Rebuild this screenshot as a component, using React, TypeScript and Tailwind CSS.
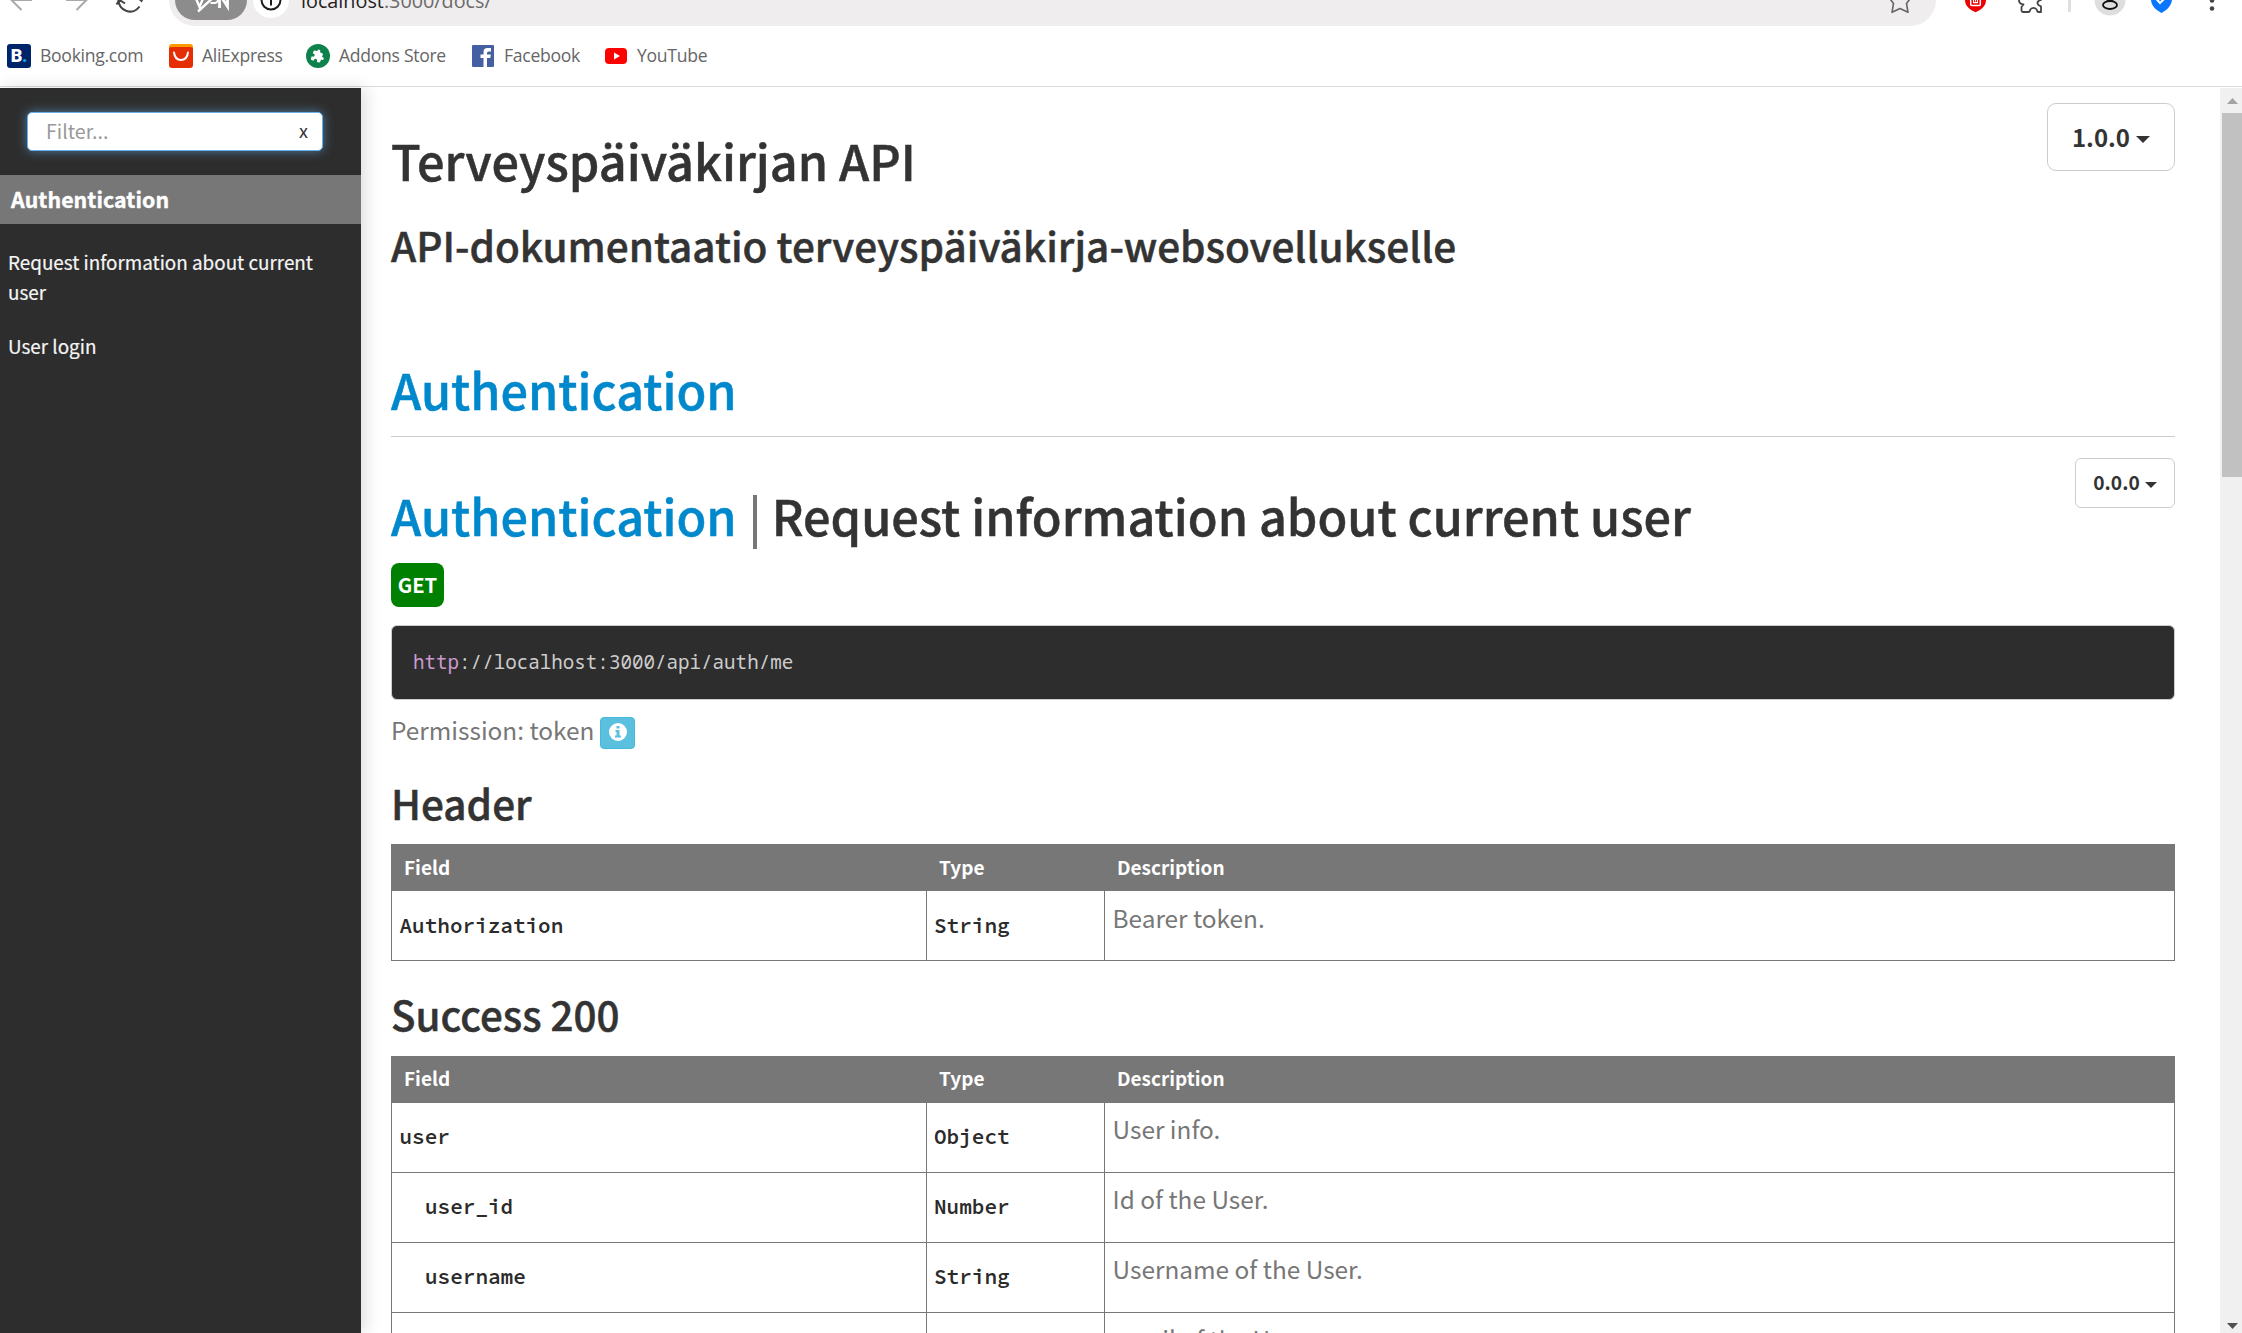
import type { ReactNode } from 'react';
import { MdExtension } from 'react-icons/md';

const sans = "font-['Noto_Sans_CJK_SC','Noto_Sans',sans-serif]";
const chrome = "font-['Open_Sans','Noto_Sans',sans-serif]";
const mono = "font-['Source_Code_Pro','Noto_Sans_Mono','DejaVu_Sans_Mono',monospace]";

function BrowserBar() {
  return (
    <div className="relative h-[26px] shrink-0 overflow-hidden bg-white">
      <div className="-mt-[26px] flex h-[52px] items-center">
        <svg width="169" height="52" viewBox="0 -26 169 52" fill="none" strokeWidth="2" className="shrink-0">
          <path d="M32 0H12M21.500-10L11.500 0L21.500 10" stroke="#a9a9a9" />
          <path d="M66 0H86M76.500-10L86.500 0L76.500 10" stroke="#a9a9a9" />
          <path d="M118.500 0a11.500 11.500 0 0 0 21 6.500M141.500 0a11.500 11.500 0 0 0-21-6.500" stroke="#444" strokeWidth="2.200" />
          <path d="M116.500 4.500L119.500 0L125 3.500M136.500-3.500L141.500 1L144-4" stroke="#444" strokeWidth="2" />
        </svg>
        <div className="flex h-[52px] w-[1767px] shrink-0 items-center rounded-full bg-[#efedee] pl-[6px]">
          <div className="flex h-10 w-[72px] items-center justify-center rounded-full bg-[#8c8c8c]">
            <svg width="40" height="26" viewBox="0 0 40 26" fill="none" stroke="#fff" strokeWidth="2.400">
              <path d="M3.500 8L8.500 20L13.500 8M7 24.500L25.500 7.500" />
              <path d="M21 9H23.500a3.500 3.500 0 0 1 0 7H19.500" strokeWidth="2" />
              <path d="M28.500 21V7L36.500 19.500V6" strokeWidth="2.800" />
            </svg>
          </div>
          <div className="ml-[6px] flex size-9 items-center justify-center rounded-full bg-white">
            <svg width="22" height="22" viewBox="0 0 22 22" fill="none" stroke="#1d1d1d" strokeWidth="2">
              <circle cx="11" cy="11" r="9.500" />
              <path d="M11 10V16.500M11 5.500V7.500" />
            </svg>
          </div>
          <div className={`${chrome} mt-[2px] ml-[12px] text-[19.800px] leading-[30px] text-[#6a6a6a]`}>
            <span className="text-[#222]">localhost</span>:3000/docs/
          </div>
        </div>
        <svg width="306" height="52" viewBox="1936 -26 306 52" fill="none" className="-ml-[48px] shrink-0 [overflow:visible]">
          <path
            d="M1900 -11L1903.500 -3.500L1911 -2.500L1906.500 3.500L1908 12.300L1900 8.500L1892 12.300L1893.500 3.500L1889 -2.500L1896.500 -3.500Z"
            stroke="#666"
            strokeWidth="1.600"
            strokeLinejoin="round"
            transform="translate(48 0)"
          />
          <g transform="translate(48 0)">
            <path d="M1965 -9L1975.500 -12L1986 -9V0C1986 6 1981 10 1975.500 12.300C1970 10 1965 6 1965 0Z" fill="#ec0000" />
            <rect x="1970.700" y="-6" width="9.600" height="11.500" rx="1" stroke="#fff" strokeWidth="1.500" />
            <path d="M1973.500 2.600H1977.500V-1M1973.500 3V-1M1975.500 -3V1.500" stroke="#fff" strokeWidth="1.100" />
            <path
              d="M2019 -1Q2018.500 4 2023.500 4.500L2021.500 7V10.500Q2021.500 12 2023 12H2028Q2030 12 2030 10Q2031 7.800 2033.500 7.800Q2036 7.800 2037 10Q2037 12 2039 12H2041V6.500L2038.500 5Q2036.500 3 2038.500 1L2041 0V-8H2019Z"
              stroke="#444"
              strokeWidth="1.800"
              strokeLinejoin="round"
            />
            <rect x="2068" y="-12" width="3" height="24" fill="#e1dfe0" />
            <circle cx="2110" cy="0" r="15.500" fill="#dedede" />
            <ellipse cx="2110" cy="5" rx="7" ry="4" stroke="#111" strokeWidth="1.800" />
            <circle cx="2110" cy="-4" r="4.500" stroke="#111" strokeWidth="1.800" />
            <path d="M2151 -9L2161.500 -12L2172 -9V0C2171 6 2167 10 2161.500 13C2156 10 2151.500 6 2151 0Z" fill="#0a75ff" />
            <path d="M2156.500 -1L2160 3L2168 -5" stroke="#fff" strokeWidth="2.200" />
            <circle cx="2212" cy="0.500" r="2.300" fill="#444" />
            <circle cx="2212" cy="8.500" r="2.300" fill="#444" />
          </g>
        </svg>
      </div>
    </div>
  );
}

function Bookmark({ icon, label, className }: { icon: ReactNode; label: string; className: string }) {
  return (
    <div className={`flex items-center ${className}`}>
      <span className="flex size-6 shrink-0 items-center justify-center">{icon}</span>
      <span className="ml-[9px] pb-[2px] whitespace-nowrap">{label}</span>
    </div>
  );
}

function Bookmarks() {
  return (
    <div
      className={`${chrome} flex h-[61px] shrink-0 items-center border-b border-[#dcdcdc] pl-[7px] text-[17.600px] leading-6 tracking-[-0.300px] text-[#666]`}
    >
      <Bookmark
        className="w-[162px]"
        label="Booking.com"
        icon={
          <span className="flex size-6 items-center justify-center rounded-[3px] bg-[#00246a] font-['Roboto',sans-serif] text-[18px] font-black text-white">
            B<span className="text-[#1ba0e8]">.</span>
          </span>
        }
      />
      <Bookmark
        className="w-[137px]"
        label="AliExpress"
        icon={
          <svg width="24" height="24" viewBox="0 0 24 24" fill="none">
            <rect width="24" height="16" rx="3" fill="#ff9a00" />
            <path d="M0 5Q0 3 3 3H21Q24 3 24 5V21Q24 24 21 24H3Q0 24 0 21Z" fill="#e62e04" />
            <path d="M5 8.500Q6 16 12 16Q18 16 19 8.500" stroke="#fff" strokeWidth="2" strokeLinecap="round" />
          </svg>
        }
      />
      <Bookmark
        className="w-[165px]"
        label="Addons Store"
        icon={
          <span className="flex size-6 items-center justify-center rounded-full bg-[#0d824b]">
            <MdExtension className="size-[14px] rotate-[20deg] text-white" />
          </span>
        }
      />
      <Bookmark
        className="w-[134px]"
        label="Facebook"
        icon={
          <svg width="22" height="22" viewBox="0 0 22 22">
            <rect width="22" height="22" rx="1" fill="#4460a0" />
            <path d="M11.500 22V13H8.500V9.500H11.500V7Q11.500 3 15.500 3H19V6.500H16.800Q15 6.500 15 8V9.500H18.800L18.300 13H15V22Z" fill="#fff" />
          </svg>
        }
      />
      <Bookmark
        className="-ml-px w-[134px]"
        label="YouTube"
        icon={
          <svg width="22" height="16" viewBox="0 0 22 16">
            <rect width="22" height="16" rx="4" fill="#f00" />
            <path d="M9 4.500L15 8L9 11.500Z" fill="#fff" />
          </svg>
        }
      />
    </div>
  );
}

function Sidebar() {
  return (
    <aside className="relative z-10 w-[361px] shrink-0 bg-[#2d2d2d] text-[18.850px] leading-[30px] text-[#f5f5f5] shadow-[4px_0_16px_rgba(0,0,0,0.140)]">
      <div className="px-[27px] pt-6 pb-6">
        <div className="flex h-[39px] w-[296px] items-center justify-between rounded-[5px] border border-[#66afe9] bg-white pr-[14px] pb-px pl-[18px] shadow-[0_0_11px_rgba(102,175,233,0.600)]">
          <span className="text-[19.600px] text-[#999]">Filter...</span>
          <span className="pb-[2px] text-[18px] text-[#333]">x</span>
        </div>
      </div>
      <div className="h-[49px] bg-[#777] pl-[11px] text-[21.300px] leading-[47px] font-bold text-white [-webkit-text-stroke:0.4px_#fff] tracking-[0.100px]">
        Authentication
      </div>
      <nav className="mt-[23px] flex flex-col gap-6 pr-10 pl-[8px] [-webkit-text-stroke:0.2px_#f5f5f5]">
        <a>Request information about current user</a>
        <a>User login</a>
      </nav>
    </aside>
  );
}

type Row = { field: string; type: string; text: string; nested?: boolean };

function ParamTable({ rows, snug = false }: { rows: Row[]; snug?: boolean }) {
  const codeLine = snug ? 'leading-[67px]' : 'leading-[69px]';
  return (
    <div className="w-[1784px]">
      <div
        className={`grid h-[47px] grid-cols-[535px_178px_1fr] bg-[#777] text-[19px] font-bold text-white ${snug ? 'leading-[44px]' : 'leading-[46px]'}`}
      >
        <span className="pl-[13px]">Field</span>
        <span className="pl-[13px]">Type</span>
        <span className="pl-[13px]">Description</span>
      </div>
      {rows.map((row) => (
        <div key={row.field} className="grid h-[70px] grid-cols-[535px_178px_1fr] border-r border-b border-[#777]">
          <span
            className={`${mono} ${codeLine} border-l border-[#777] text-[21px] font-semibold text-[#2b2b2b] ${row.nested ? 'pl-[33px]' : 'pl-[7.500px]'}`}
          >
            {row.field}
          </span>
          <span className={`${mono} ${codeLine} border-l border-[#777] pl-[7px] text-[21px] font-semibold text-[#2b2b2b]`}>{row.type}</span>
          <span
            className={`border-l border-[#777] pl-[7.500px] text-[24.400px] leading-[25px] text-[#777] ${snug ? 'pt-[13px]' : 'pt-[14px]'}`}
          >
            {row.text}
          </span>
        </div>
      ))}
    </div>
  );
}

function Caret({ className }: { className: string }) {
  return (
    <svg viewBox="0 0 14 7" className={className} fill="#333">
      <path d="M0 0H14L7 7Z" />
    </svg>
  );
}

function Main() {
  return (
    <main className="min-w-0 flex-1 overflow-hidden pl-[30px] text-[#333]">
      <div className="w-[1784px]">
        <div className="flex h-[276px] justify-between">
          <div className="[-webkit-text-stroke:0.5px_#333]">
            <h1 className="mt-[47px] text-[48.600px] leading-[50px] font-medium whitespace-nowrap">Terveyspäiväkirjan API</h1>
            <h2 className="mt-[38px] text-[40.500px] leading-[44px] font-medium whitespace-nowrap">
              API-dokumentaatio terveyspäiväkirja-websovellukselle
            </h2>
          </div>
          <div className="mt-[15px] flex h-[68px] w-[128px] items-center justify-center gap-[6px] rounded-[9px] border border-[#ccc] text-[24px] leading-[30px] font-bold">
            <span className="-mt-px">1.0.0</span>
            <Caret className="mt-[5px] w-[14px]" />
          </div>
        </div>
        <h1 className="text-[48.600px] leading-[50px] font-medium text-[#08c] [-webkit-text-stroke:0.5px_#08c]">Authentication</h1>
        <div className="mt-[22px] flex h-[104px] justify-between border-t border-[#ccc]">
          <h1 className="mt-[53px] flex text-[48.600px] leading-[50px] font-medium whitespace-nowrap">
            <span className="text-[#08c] [-webkit-text-stroke:0.5px_#08c]">Authentication</span>
            <span className="mr-[15px] ml-[16px] mt-[5px] h-[54px] w-[4px] bg-[#777]" />
            <span className="[-webkit-text-stroke:0.5px_#333]">Request information about current user</span>
          </h1>
          <div className="mt-[21px] flex h-[50px] w-[100px] items-center justify-center gap-[5px] rounded-[6px] border border-[#ccc] text-[19.200px] leading-[24px] font-bold">
            <span className="-mt-[2px]">0.0.0</span>
            <Caret className="mt-[4px] w-[12px]" />
          </div>
        </div>
        <div className="mt-[23px] flex h-[44px] w-[53px] items-center justify-center rounded-[8px] bg-[#008000] text-[20.200px] leading-[44px] font-bold text-white">
          GET
        </div>
        <pre className="mt-[18px] h-[75px] rounded-[6px] border border-[#ccc] bg-[#2d2d2d] pl-[21px] font-['Noto_Sans_Mono','DejaVu_Sans_Mono',monospace] text-[19.220px] leading-[72px] text-[#ccc]">
          <span className="text-[#cc99cd]">http</span>://localhost:3000/api/auth/me
        </pre>
        <div className="mt-[17px] flex h-8 items-start text-[24.400px] leading-[25px] text-[#777]">
          <span>Permission: token</span>
          <span className="ml-[6px] flex h-8 w-[35px] items-center justify-center rounded-[4px] border border-[#46b8da] bg-[#5bc0de]">
            <svg width="18" height="18" viewBox="0 0 18 18" className="-mt-[2px]">
              <circle cx="9" cy="9" r="9" fill="#fff" />
              <path d="M7.500 3H10.500V5.500H7.500ZM6.500 7H10.500V12.500H12V14.500H6V12.500H7.500V9H6.500Z" fill="#5bc0de" />
            </svg>
          </span>
        </div>
        <h2 className="mt-[32px] mb-[19px] text-[40.500px] leading-[44px] font-medium [-webkit-text-stroke:0.5px_#333]">Header</h2>
        <ParamTable rows={[{ field: 'Authorization', type: 'String', text: 'Bearer token.' }]} />
        <h2 className="mt-[31px] mb-[20px] text-[40.300px] leading-[44px] font-medium [-webkit-text-stroke:0.5px_#333]">Success 200</h2>
        <ParamTable
          snug
          rows={[
            { field: 'user', type: 'Object', text: 'User info.' },
            { field: 'user_id', type: 'Number', text: 'Id of the User.', nested: true },
            { field: 'username', type: 'String', text: 'Username of the User.', nested: true },
            { field: 'email', type: 'String', text: 'email of the User.', nested: true },
          ]}
        />
      </div>
    </main>
  );
}

function Scrollbar() {
  return (
    <div className="flex w-[22px] shrink-0 flex-col items-end bg-[#f0f0f0]">
      <svg width="20" height="25" viewBox="0 0 20 25" fill="#a3a3a3">
        <path d="M5 16L10.500 10L16 16Z" />
      </svg>
      <div className="h-[364px] w-5 bg-[#c1c1c1]" />
      <svg width="20" height="20" viewBox="0 0 20 20" fill="#505050" className="mt-auto">
        <path d="M5 10H16L10.500 16Z" />
      </svg>
    </div>
  );
}

export default function App() {
  return (
    <div className={`${sans} flex h-[1333px] w-[2242px] flex-col overflow-hidden bg-white`}>
      <BrowserBar />
      <Bookmarks />
      <div className="mt-px flex min-h-0 flex-1">
        <Sidebar />
        <Main />
        <Scrollbar />
      </div>
    </div>
  );
}
